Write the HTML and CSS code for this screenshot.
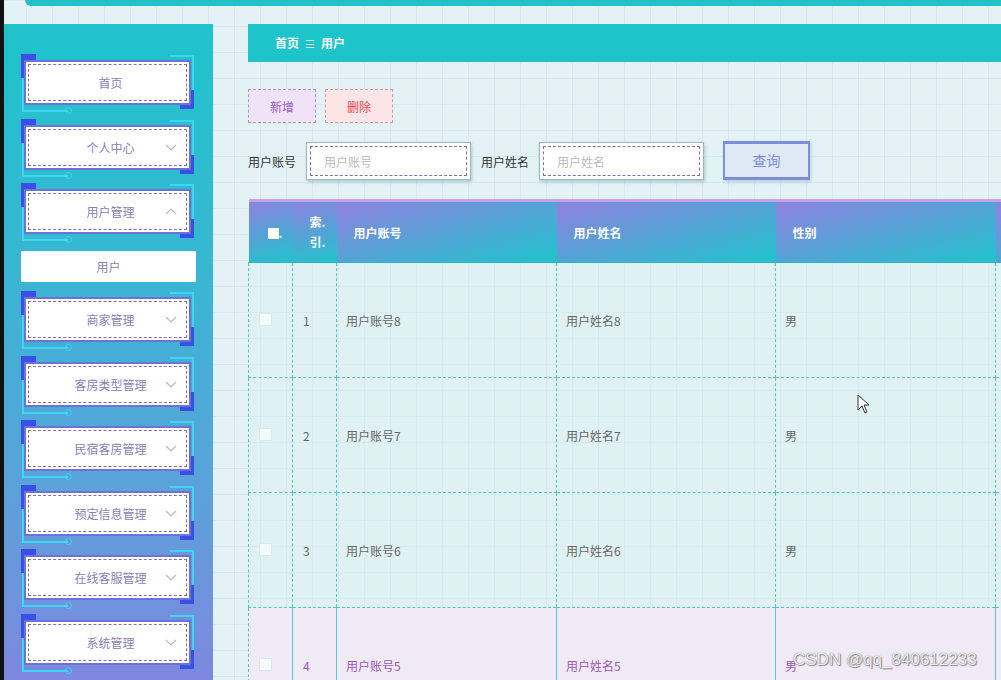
FILE: index.html
```html
<!DOCTYPE html>
<html lang="zh-CN">
<head>
    <meta charset="UTF-8">
    <meta name="viewport" content="width=device-width, initial-scale=1.0">
    <title>用户</title>
    <link rel="stylesheet" href="styles.css">
</head>
<body>
    <div class="app">
        <div class="topbar"></div>
        <div class="layout">
            <aside class="sidebar">
                <div class="menu-item">
                    <span class="line-l"></span><span class="line-r"></span>
                    <div class="menu-box"><span>首页</span></div>
                </div>
                <div class="menu-item">
                    <span class="line-l"></span><span class="line-r"></span>
                    <div class="menu-box"><span>个人中心</span>
                        <svg class="chev" width="12" height="7" viewBox="0 0 12 7"><path d="M1 1l5 5 5-5"/></svg></div>
                </div>
                <div class="menu-item">
                    <span class="line-l"></span><span class="line-r"></span>
                    <div class="menu-box"><span>用户管理</span>
                        <svg class="chev" width="12" height="7" viewBox="0 0 12 7"><path d="M1 6l5-5 5 5"/></svg></div>
                </div>
                <div class="sub-item">用户</div>
                <div class="menu-item">
                    <span class="line-l"></span><span class="line-r"></span>
                    <div class="menu-box"><span>商家管理</span>
                        <svg class="chev" width="12" height="7" viewBox="0 0 12 7"><path d="M1 1l5 5 5-5"/></svg></div>
                </div>
                <div class="menu-item">
                    <span class="line-l"></span><span class="line-r"></span>
                    <div class="menu-box"><span>客房类型管理</span>
                        <svg class="chev" width="12" height="7" viewBox="0 0 12 7"><path d="M1 1l5 5 5-5"/></svg></div>
                </div>
                <div class="menu-item">
                    <span class="line-l"></span><span class="line-r"></span>
                    <div class="menu-box"><span>民宿客房管理</span>
                        <svg class="chev" width="12" height="7" viewBox="0 0 12 7"><path d="M1 1l5 5 5-5"/></svg></div>
                </div>
                <div class="menu-item">
                    <span class="line-l"></span><span class="line-r"></span>
                    <div class="menu-box"><span>预定信息管理</span>
                        <svg class="chev" width="12" height="7" viewBox="0 0 12 7"><path d="M1 1l5 5 5-5"/></svg></div>
                </div>
                <div class="menu-item">
                    <span class="line-l"></span><span class="line-r"></span>
                    <div class="menu-box"><span>在线客服管理</span>
                        <svg class="chev" width="12" height="7" viewBox="0 0 12 7"><path d="M1 1l5 5 5-5"/></svg></div>
                </div>
                <div class="menu-item">
                    <span class="line-l"></span><span class="line-r"></span>
                    <div class="menu-box"><span>系统管理</span>
                        <svg class="chev" width="12" height="7" viewBox="0 0 12 7"><path d="M1 1l5 5 5-5"/></svg></div>
                </div>
            </aside>

            <main class="main">
                <div class="breadcrumb">
                    <span>首页</span><span class="sep">☰</span><span>用户</span>
                </div>

                <div class="actions">
                    <button type="button" class="btn btn-add">新增</button>
                    <button type="button" class="btn btn-del">删除</button>
                </div>

                <form class="search">
                    <label for="account">用户账号</label>
                    <div class="field"><input type="text" id="account" placeholder="用户账号"></div>
                    <label for="uname">用户姓名</label>
                    <div class="field"><input type="text" id="uname" placeholder="用户姓名"></div>
                    <button type="button" class="btn-query">查询</button>
                </form>

                <table class="grid">
                    <colgroup>
                        <col class="c-check"><col class="c-idx"><col class="c-acc"><col class="c-name"><col class="c-sex"><col class="c-more">
                    </colgroup>
                    <thead>
                        <tr>
                            <th class="th-check"><span class="box-white"></span>.</th>
                            <th class="th-idx">索.<br>引.</th>
                            <th>用户账号</th>
                            <th>用户姓名</th>
                            <th>性别</th>
                            <th></th>
                        </tr>
                    </thead>
                    <tbody>
                        <tr>
                            <td class="td-check"><span class="box"></span></td>
                            <td class="td-idx">1</td><td>用户账号8</td><td>用户姓名8</td><td>男</td><td></td>
                        </tr>
                        <tr>
                            <td class="td-check"><span class="box"></span></td>
                            <td class="td-idx">2</td><td>用户账号7</td><td>用户姓名7</td><td>男</td><td></td>
                        </tr>
                        <tr>
                            <td class="td-check"><span class="box"></span></td>
                            <td class="td-idx">3</td><td>用户账号6</td><td>用户姓名6</td><td>男</td><td></td>
                        </tr>
                        <tr class="row-hover">
                            <td class="td-check"><span class="box"></span></td>
                            <td class="td-idx">4</td><td>用户账号5</td><td>用户姓名5</td><td>男</td><td></td>
                        </tr>
                    </tbody>
                </table>
            </main>
        </div>

        <svg class="cursor" width="13" height="20" viewBox="0 0 13 20"><path d="M1 1v15l4-4 3 7 2-1-3-7h5z"/></svg>
        <div class="watermark">CSDN @qq_840612233</div>
    </div>
</body>
</html>
```

FILE: styles.css
```css
html, body {
    margin: 0;
    height: 100%;
    overflow: hidden;
}
body {
    font-family: "Noto Sans CJK SC", "Noto Sans", sans-serif;
    font-size: 12px;
    color: #333;
    background-color: #e3f2f5;
    background-image:
        linear-gradient(rgba(196, 222, 230, 0.45) 1px, transparent 1px),
        linear-gradient(90deg, rgba(196, 222, 230, 0.45) 1px, transparent 1px);
    background-size: 26px 26px;
}
.app {
    position: relative;
    height: 100%;
    border-left: 4px solid #111;
    box-sizing: border-box;
}
.topbar {
    height: 6px;
    margin-left: 21px;
    background: #21bfc7;
    border-bottom-left-radius: 22px;
}
.layout {
    display: flex;
    margin-top: 18px;
    height: calc(100% - 24px);
}

/* sidebar */
.sidebar {
    flex: 0 0 209px;
    padding-top: 36px;
    box-sizing: border-box;
    background: linear-gradient(180deg, #1ec4cb 0%, #3bb5d3 40%, #5aa2da 70%, #7d88df 100%);
}
.menu-item {
    position: relative;
    height: 45px;
    margin: 0 22px 19.5px 20px;
}
.menu-item::before,
.menu-item::after {
    content: "";
    position: absolute;
    background: #3a4fe3;
}
.menu-item::before {
    left: -3px;
    top: -6px;
    width: 15px;
    height: 24px;
}
.menu-item::after {
    right: -3px;
    top: 30px;
    width: 14px;
    height: 19px;
}
.line-l {
    position: absolute;
    left: -2px;
    top: 18px;
    width: 44px;
    height: 32px;
    border-left: 2px solid #3ed6f2;
    border-bottom: 2px solid #3ed6f2;
}
.line-l::after {
    content: "";
    position: absolute;
    right: -4px;
    bottom: -4px;
    width: 5px;
    height: 5px;
    border-radius: 50%;
    border: 1px solid #3ed6f2;
}
.line-r {
    position: absolute;
    right: -3px;
    top: -5px;
    width: 22px;
    height: 34px;
    border-top: 2px solid #3ed6f2;
    border-right: 2px solid #3ed6f2;
}
.menu-box {
    position: relative;
    z-index: 1;
    height: 100%;
    box-sizing: border-box;
    padding-left: 6px;
    background: #fff;
    border: 2px solid #6b73d8;
    display: flex;
    align-items: center;
    justify-content: center;
    color: #8c7db6;
    font-size: 12px;
}
.menu-box::before {
    content: "";
    position: absolute;
    inset: 2px;
    border: 1px dashed #8d6fab;
}
.chev {
    position: absolute;
    right: 12px;
    top: 17px;
    fill: none;
    stroke: #bcb3d4;
    stroke-width: 1.2;
}
.sub-item {
    margin: -2.5px 17px 15px 17px;
    height: 31px;
    line-height: 31px;
    background: #fff;
    text-align: center;
    color: #8a7fae;
    font-size: 12px;
}

/* main */
.main {
    flex: 1;
    min-width: 0;
    margin-left: 35px;
    overflow: hidden;
}
.breadcrumb {
    height: 38px;
    box-sizing: border-box;
    display: flex;
    align-items: center;
    gap: 6px;
    padding-left: 27px;
    background: #1dc5cb;
    border-bottom: 1px solid #36b7bd;
    color: #fff;
    font-weight: bold;
    font-size: 12px;
}
.breadcrumb .sep {
    font-weight: normal;
    font-size: 11px;
    color: #d8f5f6;
}
.actions {
    display: flex;
    gap: 9px;
    margin-top: 27px;
}
.btn {
    width: 68px;
    height: 34px;
    font-family: inherit;
    font-size: 12px;
    cursor: pointer;
}
.btn-add {
    background: #f0e3f8;
    color: #9a5cc2;
    border: 1px dashed #b792cf;
}
.btn-del {
    background: #fde4e6;
    color: #e34b57;
    border: 1px dashed #d79aa3;
}
.search {
    display: flex;
    align-items: center;
    margin-top: 18px;
    height: 40px;
}
.search label {
    font-size: 12px;
    color: #333;
    margin-right: 10px;
}
.field {
    width: 165px;
    height: 38px;
    box-sizing: border-box;
    padding: 3px;
    margin-right: 10px;
    background: #fff;
    border: 1px solid #9ab8c0;
    box-shadow: 1px 2px 3px rgba(80, 120, 130, 0.35);
}
.field input {
    width: 100%;
    height: 100%;
    box-sizing: border-box;
    border: 1px dashed #8d6aa9;
    padding: 0 13px;
    font-family: inherit;
    font-size: 12px;
    outline: none;
}
.field input::placeholder {
    color: #bbb;
}
.btn-query {
    margin-left: 9px;
    margin-top: -2px;
    width: 87px;
    height: 39px;
    background: #dfe8f5;
    border: 2px solid #7b8fd8;
    border-top-width: 3px;
    border-bottom-width: 3px;
    color: #7a8dd6;
    font-family: inherit;
    font-size: 14px;
    cursor: pointer;
    box-shadow: 1px 2px 3px rgba(80, 100, 140, 0.25);
}

/* table */
.grid {
    margin-top: 18px;
    width: 947px;
    table-layout: fixed;
    border-collapse: collapse;
}
.c-check, .c-idx { width: 44px; }
.c-acc { width: 220px; }
.c-name { width: 219px; }
.c-sex { width: 220px; }
.c-more { width: 200px; }
.grid th {
    height: 60px;
    padding: 0 17px;
    text-align: left;
    color: #fff;
    font-size: 12px;
    font-weight: bold;
    border-top: 3px solid #c6a1ea;
    background: linear-gradient(165deg, #9180e0 0%, #5a9fd6 45%, #1fc4cc 100%);
    border-bottom: 1px solid #2ab7bf;
}
.grid th.th-check {
    padding: 0 0 0 19px;
}
.grid th.th-idx {
    padding: 0 0 0 17px;
    line-height: 20px;
}
.box-white {
    display: inline-block;
    width: 11px;
    height: 11px;
    background: #fff;
    vertical-align: -1px;
}
.grid td {
    height: 114px;
    padding: 0 9px;
    color: #666;
    font-size: 12px;
    border-right: 1px dashed #55c5c8;
    border-bottom: 1px dashed #55c5c8;
    background: rgba(214, 240, 240, 0.35);
}
.grid td:first-child {
    border-left: 1px dashed #55c5c8;
}
.grid td.td-check {
    padding: 0 0 0 10px;
}
.grid td.td-idx {
    padding-left: 10px;
}
.box {
    display: inline-block;
    width: 11px;
    height: 11px;
    background: #f4fafa;
    border: 1px solid #dbeaea;
}
.row-hover td {
    background: #efeaf6;
    color: #9b58b8;
    border-right-style: solid;
    border-bottom-color: transparent;
}

.cursor {
    position: absolute;
    left: 853px;
    top: 394px;
    fill: #fff;
    stroke: #333;
    stroke-width: 1;
}
.watermark {
    position: absolute;
    left: 789px;
    top: 650px;
    font-family: "Liberation Sans", Arial, sans-serif;
    font-size: 17px;
    color: rgba(255, 255, 255, 0.9);
    text-shadow: 0 0 1px #555, 1px 1px 1px rgba(0, 0, 0, 0.4);
}
```
